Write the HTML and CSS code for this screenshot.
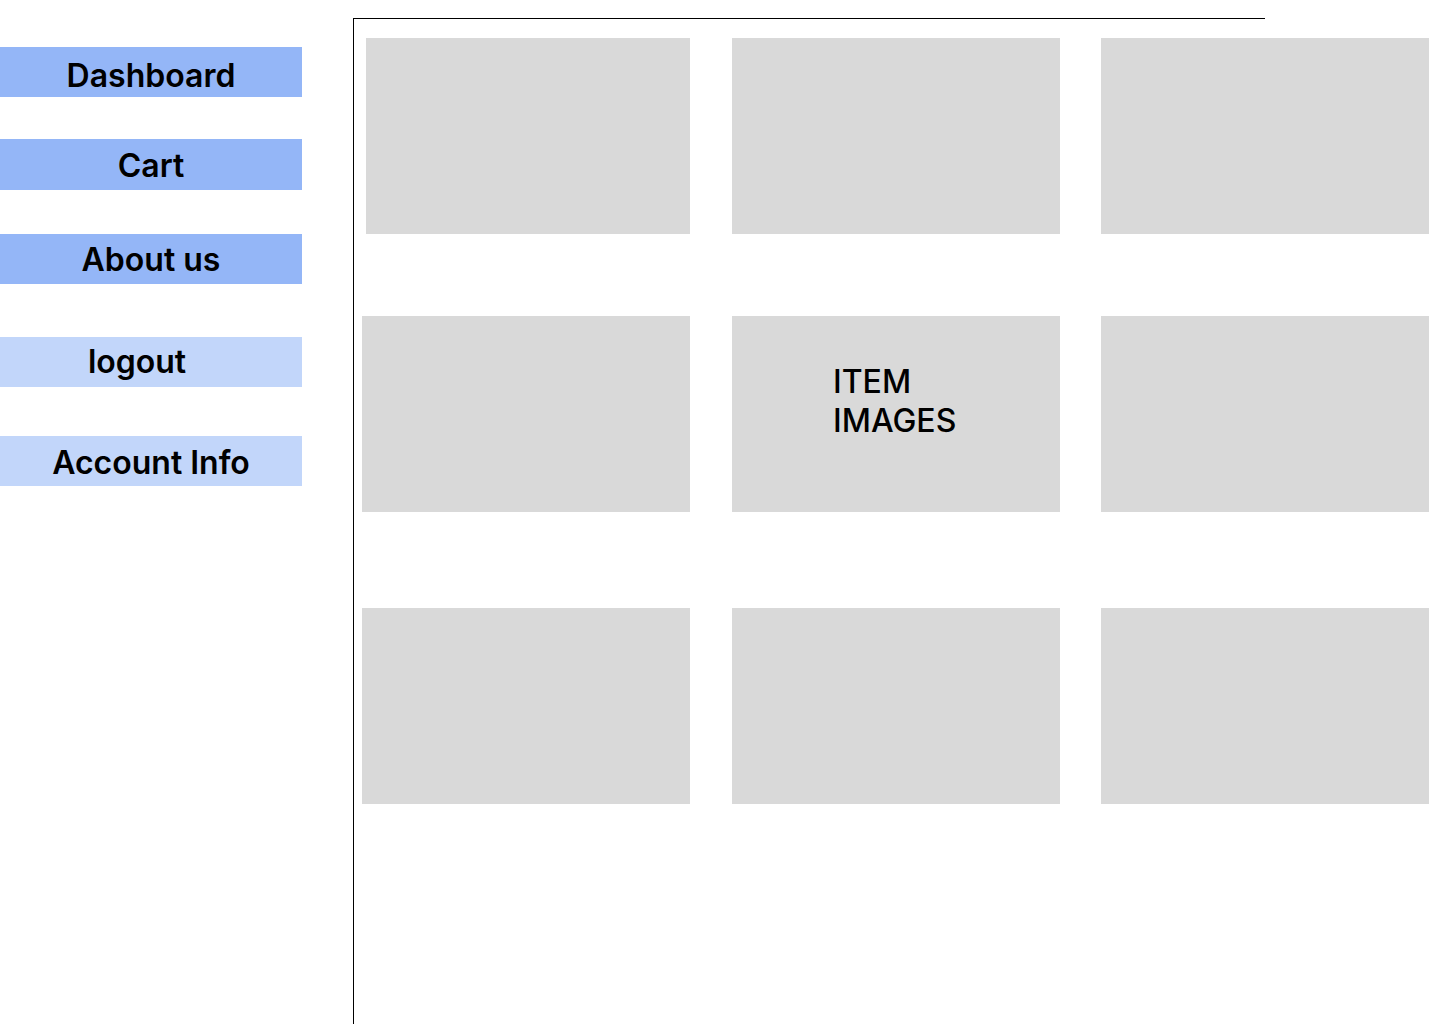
FILE: index.html
```html
<!DOCTYPE html>
<html lang="en">

<head>
    <meta charset="UTF-8">
    <meta name="viewport" content="width=device-width, initial-scale=1.0">
    <title>Shop</title>
    <link rel="stylesheet" href="styles.css">
</head>

<body>
    <div class="page">
        <!-- Side navigation -->
        <nav class="sidebar">
            <a href="#" class="nav-btn nav-dashboard">Dashboard</a>
            <a href="#" class="nav-btn nav-cart">Cart</a>
            <a href="#" class="nav-btn nav-about">About us</a>
            <a href="#" class="nav-btn light nav-logout">logout</a>
            <a href="#" class="nav-btn light nav-account">Account Info</a>
        </nav>

        <!-- Item grid -->
        <main class="main">
            <div class="grid">
                <div class="card first"></div>
                <div class="card"></div>
                <div class="card"></div>
                <div class="card"></div>
                <div class="card"><span class="card-label">ITEM<br>IMAGES</span></div>
                <div class="card"></div>
                <div class="card"></div>
                <div class="card"></div>
                <div class="card"></div>
            </div>
        </main>
    </div>
</body>

</html>
```

FILE: styles.css
```css
/* Basic page setup */
body {
    margin: 0;
    font-family: Inter, "Noto Sans", sans-serif;
    background: #fff;
    color: #000;
}

.page {
    display: flex;
    flex-direction: row;
    align-items: flex-start;
    width: 1440px;
    height: 1024px;
    overflow: hidden;
}

/* Sidebar navigation */
.sidebar {
    width: 302px;
    flex-shrink: 0;
    display: flex;
    flex-direction: column;
    padding-top: 47px;
    margin-right: 51px;
}

.nav-btn {
    display: block;
    height: 50px;
    line-height: 53px;
    text-align: center;
    background: #94b6f7;
    color: #000;
    text-decoration: none;
    font-size: 32px;
    font-weight: 600;
}

.nav-btn.light {
    background: #c2d6fa;
}

.nav-dashboard {
    line-height: 57px;
}

.nav-cart {
    margin-top: 42px;
    height: 51px;
}

.nav-about {
    margin-top: 44px;
    line-height: 51px;
}

.nav-logout {
    margin-top: 53px;
    padding-right: 28px;
    line-height: 49px;
}

.nav-account {
    margin-top: 49px;
}

/* Main content area */
.main {
    box-sizing: border-box;
    margin-top: 18px;
    width: 912px;
    height: 1006px;
    border-top: 1px solid #000;
    border-left: 1px solid #000;
    padding: 19px 0 0 8px;
}

.grid {
    display: grid;
    grid-template-columns: 370px 369px 328px;
    grid-template-rows: 278px 292px 196px;
    align-items: start;
    width: 1067px;
}

.card {
    width: 328px;
    height: 196px;
    background: #d9d9d9;
}

.card.first {
    margin-left: 4px;
    width: 324px;
}

.card-label {
    display: block;
    padding: 46px 0 0 101px;
    font-size: 32px;
    font-weight: 500;
    line-height: 39px;
}
```
